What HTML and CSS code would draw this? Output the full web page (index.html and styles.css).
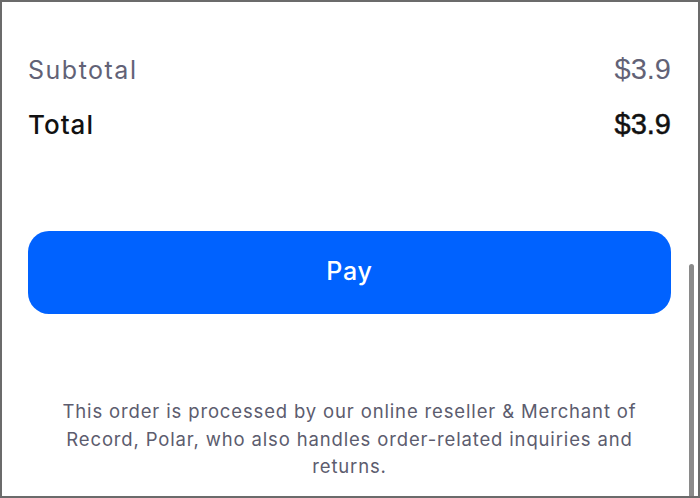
FILE: index.html
```html
<!DOCTYPE html>
<html>
	<head>
		<meta charset="utf-8" />
		<title>Checkout</title>
		<link rel="stylesheet" href="styles.css">
	</head>
	<body>
		<div class="frame">
			<main>
				<div class="summary">
					<div class="row sub">
						<span>Subtotal</span>
						<span class="price">$3.9</span>
					</div>
					<div class="row total">
						<span>Total</span>
						<span class="price">$3.9</span>
					</div>
				</div>

				<button class="pay">Pay</button>

				<p class="note">This order is processed by our online reseller &amp; Merchant of Record, Polar, who also handles order-related inquiries and returns.</p>
			</main>
			<div class="scrollbar"><div class="thumb"></div></div>
		</div>
	</body>
</html>
```

FILE: styles.css
```css
* {
	padding: 0;
	margin: 0;
	box-sizing: border-box;
}

html, body {
	height: 100%;
	background: #fff;
}

body {
	font-family: 'Inter', sans-serif;
	color: #111;
}

.frame {
	position: relative;
	width: 700px;
	height: 498px;
	border: 2px solid #6b6b6b;
	overflow: hidden;
}

main {
	padding: 0 27px 0 26px;
}

.summary {
	padding-top: 51px;
}

.row {
	display: flex;
	justify-content: space-between;
	align-items: baseline;
}

.row.sub {
	font-size: 25px;
	letter-spacing: 1.5px;
	color: #626276;
	height: 34px;
}

.row.total {
	margin-top: 21px;
	font-size: 26px;
	font-weight: 500;
	letter-spacing: 1px;
	color: #111;
}

.price {
	font-family: 'Liberation Sans', sans-serif;
	font-size: 29px;
	letter-spacing: 0;
}

.row.total .price {
	font-weight: 400;
	-webkit-text-stroke: 0.5px #111;
}

.pay {
	display: block;
	width: 100%;
	height: 83px;
	margin-top: 90px;
	border: none;
	border-radius: 21px;
	background: #0062ff;
	color: #fff;
	font-family: 'Inter', sans-serif;
	font-size: 25px;
	font-weight: 500;
	letter-spacing: 0.8px;
	padding-bottom: 3px;
}

.note {
	margin: 84px auto 0;
	width: 600px;
	text-align: center;
	font-size: 18.5px;
	letter-spacing: 0.85px;
	line-height: 27.5px;
	color: #5c5c6e;
}

.scrollbar {
	position: absolute;
	top: 0;
	right: 4px;
	bottom: 0;
	width: 5px;
}

.thumb {
	position: absolute;
	top: 262px;
	bottom: 0;
	left: 0;
	right: 0;
	border-radius: 3px 3px 0 0;
	background: #8a8a8a;
}
```
